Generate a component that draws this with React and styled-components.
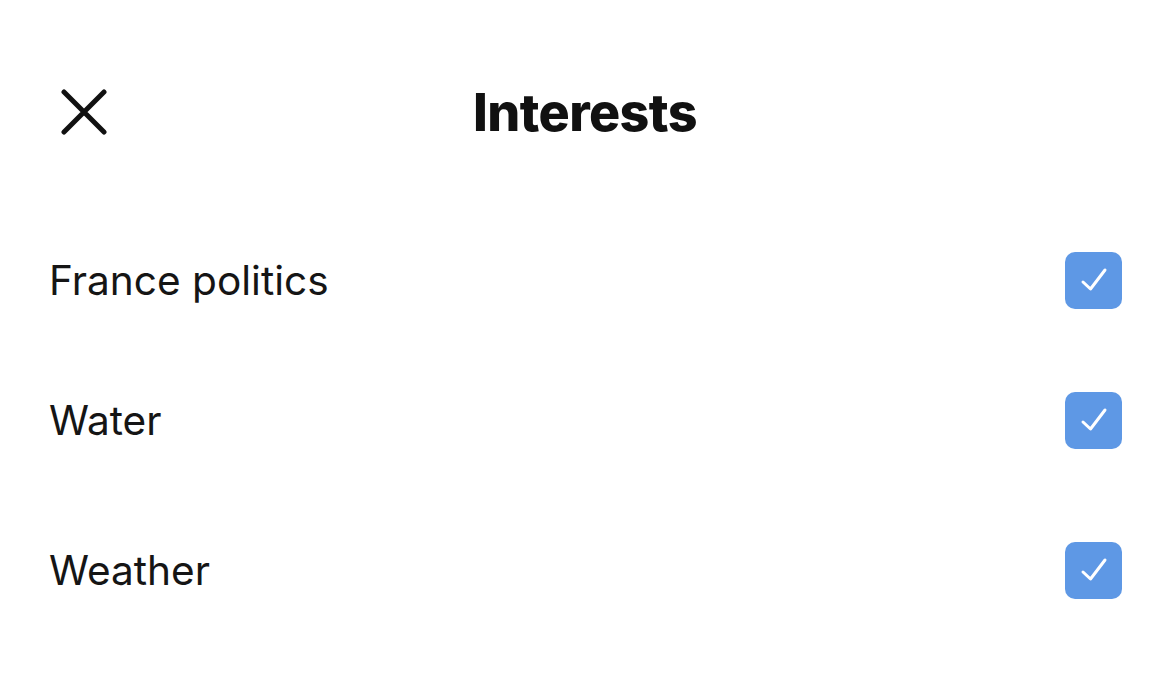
import React, { useState } from "react";
import styled, { createGlobalStyle } from "styled-components";

const GlobalStyle = createGlobalStyle`
    html, body {
        margin: 0;
        padding: 0;
        background: #ffffff;
    }
    body {
        font-family: Inter, "Noto Sans", "Liberation Sans", sans-serif;
        color: #111111;
    }
`;

const StyledPage = styled.div`
    width: 1170px;
    height: 673px;
    background: #ffffff;
    overflow: hidden;
`;

const StyledHeader = styled.header`
    position: relative;
    height: 196px;
    margin-top: 14px;
    display: flex;
    align-items: center;
    justify-content: center;
`;

const CloseButton = styled.button`
    position: absolute;
    left: 56px;
    top: 50%;
    transform: translateY(-50%);
    width: 56px;
    height: 56px;
    padding: 0;
    border: none;
    background: none;
    display: flex;
    align-items: center;
    justify-content: center;
    cursor: pointer;
`;

const Title = styled.h1`
    margin: 0;
    font-size: 52px;
    font-weight: 800;
    letter-spacing: -0.6px;
    color: #111111;
`;

const List = styled.ul`
    list-style: none;
    margin: 0;
    padding: 0 48px 0 49px;
`;

const Row = styled.li`
    height: 140px;
    margin-top: ${props => props.offset || 0}px;
    display: flex;
    align-items: center;
    justify-content: space-between;
`;

const Label = styled.span`
    font-size: 40.6px;
    font-weight: 400;
    color: #151515;
`;

const Box = styled.button`
    width: 57px;
    height: 57px;
    padding: 0;
    border: ${props => (props.checked ? "none" : "3px solid #8a8a8a")};
    border-radius: 10px;
    background: ${props => (props.checked ? "#5e98e5" : "#ffffff")};
    display: flex;
    align-items: center;
    justify-content: center;
    cursor: pointer;
`;

const interests = [
    { id: "france", name: "France politics", offset: 0 },
    { id: "water", name: "Water", offset: 0 },
    { id: "weather", name: "Weather", offset: 10 }
];

function App() {
    const [checked, setChecked] = useState({
        france: true,
        water: true,
        weather: true
    });

    function toggle(id) {
        setChecked({ ...checked, [id]: !checked[id] });
    }

    return (
        <StyledPage>
            <GlobalStyle />
            <StyledHeader>
                <CloseButton aria-label="Close">
                    <svg width="46" height="46" viewBox="0 0 46 46">
                        <path
                            d="M3 3 L43 43 M43 3 L3 43"
                            stroke="#111111"
                            strokeWidth="5"
                            strokeLinecap="round"
                        />
                    </svg>
                </CloseButton>
                <Title>Interests</Title>
            </StyledHeader>
            <List>
                {interests.map(item => (
                    <Row key={item.id} offset={item.offset}>
                        <Label>{item.name}</Label>
                        <Box
                            checked={checked[item.id]}
                            onClick={() => toggle(item.id)}
                            aria-label={item.name}
                        >
                            {checked[item.id] && (
                                <svg width="30" height="30" viewBox="0 0 30 30">
                                    <path
                                        d="M4 17 L11.5 24 L26 5"
                                        fill="none"
                                        stroke="#ffffff"
                                        strokeWidth="3"
                                        strokeLinecap="round"
                                        strokeLinejoin="round"
                                    />
                                </svg>
                            )}
                        </Box>
                    </Row>
                ))}
            </List>
        </StyledPage>
    );
}

export default App;
